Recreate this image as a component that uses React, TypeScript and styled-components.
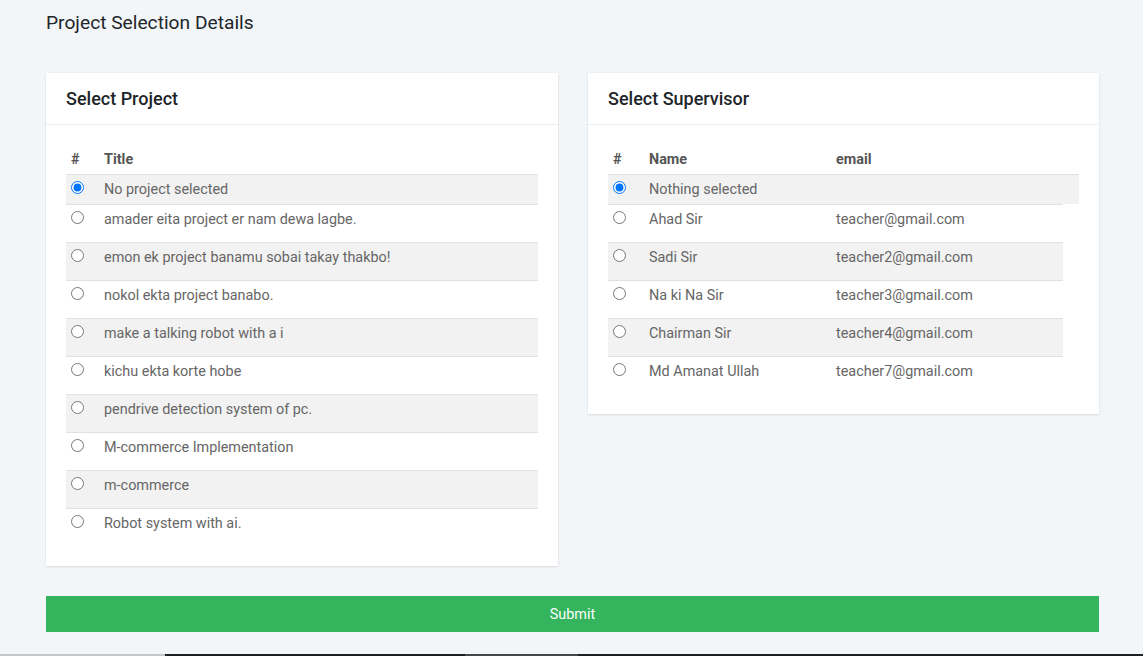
import React, { useState } from "react";
import styled, { createGlobalStyle } from "styled-components";

const GlobalStyle = createGlobalStyle`
  html, body { margin: 0; padding: 0; background: #f3f6f9; }
  body { font-family: Roboto, "Liberation Sans", sans-serif; color: #212529; }
  * { box-sizing: border-box; }
`;

const Page = styled.div`
  padding: 11px 44px 0 46px;
  display: flex;
  flex-direction: column;
`;

const PageTitle = styled.h1`
  margin: 0;
  font-size: 19.2px;
  line-height: 23px;
  font-weight: 400;
  color: #212529;
`;

const Columns = styled.div`
  margin-top: 39px;
  display: grid;
  grid-template-columns: 512px 511px;
  column-gap: 30px;
  align-items: start;
`;

const Card = styled.section`
  background: #fff;
  box-shadow: 0 1px 2px rgba(0, 0, 0, 0.1), 0 0 1px rgba(0, 0, 0, 0.08);
`;

const CardHeader = styled.header`
  padding: 15px 20px 14px;
  border-bottom: 1px solid #ebedf0;
`;

const CardTitle = styled.h2`
  margin: 0;
  font-size: 18px;
  line-height: 22px;
  font-weight: 500;
  color: #212529;
`;

const CardBody = styled.div`
  padding: 20px 20px 20px;
`;

const Row = styled.div<{ $cols: string; $shaded?: boolean; $first?: boolean; $narrow?: boolean }>`
  display: grid;
  grid-template-columns: ${(p) => p.$cols};
  align-items: start;
  padding: ${(p) => (p.$first ? "6px 0 6px" : "6px 0 14px")};
  background: ${(p) => (p.$shaded ? "#f2f2f2" : "transparent")};
  border-top: 1px solid #dee2e6;
  width: ${(p) => (p.$narrow ? "455px" : "100%")};
  font-size: 14.4px;
  line-height: 17px;
  color: #666;
`;

const HeadRow = styled.div<{ $cols: string }>`
  display: grid;
  grid-template-columns: ${(p) => p.$cols};
  padding: 6px 0 6px;
  font-size: 14.4px;
  line-height: 17px;
  font-weight: 700;
  color: #555;
`;

const IndexCell = styled.div`
  padding-left: 5px;
  display: flex;
  align-items: flex-start;
  height: 17px;
`;

const Cell = styled.div`
  white-space: nowrap;
`;

const Radio = styled.input`
  margin: 0;
  width: 13px;
  height: 13px;
`;

const Submit = styled.button`
  margin-top: 30px;
  width: 1053px;
  height: 36px;
  border: none;
  background: #34b45c;
  color: #fff;
  font-family: Roboto, "Liberation Sans", sans-serif;
  font-size: 14.4px;
  font-weight: 400;
  cursor: pointer;
`;

const Footer = styled.footer`
  margin-top: 22px;
  height: 40px;
  display: flex;
`;

const FooterSeg = styled.div<{ $w?: number; $c: string }>`
  background: ${(p) => p.$c};
  ${(p) => (p.$w ? `width: ${p.$w}px;` : "flex: 1;")}
`;

const projects = [
  "amader eita project er nam dewa lagbe.",
  "emon ek project banamu sobai takay thakbo!",
  "nokol ekta project banabo.",
  "make a talking robot with a i",
  "kichu ekta korte hobe",
  "pendrive detection system of pc.",
  "M-commerce Implementation",
  "m-commerce",
  "Robot system with ai.",
];

const supervisors = [
  ["Ahad Sir", "teacher@gmail.com"],
  ["Sadi Sir", "teacher2@gmail.com"],
  ["Na ki Na Sir", "teacher3@gmail.com"],
  ["Chairman Sir", "teacher4@gmail.com"],
  ["Md Amanat Ullah", "teacher7@gmail.com"],
];

const PCOLS = "38px 1fr";
const SCOLS = "41px 187px 1fr";

export default function App() {
  const [project, setProject] = useState(-1);
  const [sup, setSup] = useState(-1);
  return (
    <>
      <GlobalStyle />
      <Page>
        <PageTitle>Project Selection Details</PageTitle>
        <Columns>
          <Card>
            <CardHeader>
              <CardTitle>Select Project</CardTitle>
            </CardHeader>
            <CardBody>
              <HeadRow $cols={PCOLS}>
                <IndexCell>#</IndexCell>
                <Cell>Title</Cell>
              </HeadRow>
              <Row $cols={PCOLS} $shaded $first>
                <IndexCell>
                  <Radio type="radio" name="project" checked={project === -1} onChange={() => setProject(-1)} />
                </IndexCell>
                <Cell>No project selected</Cell>
              </Row>
              {projects.map((t, i) => (
                <Row key={t} $cols={PCOLS} $shaded={i % 2 === 1}>
                  <IndexCell>
                    <Radio type="radio" name="project" checked={project === i} onChange={() => setProject(i)} />
                  </IndexCell>
                  <Cell>{t}</Cell>
                </Row>
              ))}
            </CardBody>
          </Card>
          <Card>
            <CardHeader>
              <CardTitle>Select Supervisor</CardTitle>
            </CardHeader>
            <CardBody>
              <HeadRow $cols={SCOLS}>
                <IndexCell>#</IndexCell>
                <Cell>Name</Cell>
                <Cell>email</Cell>
              </HeadRow>
              <Row $cols={SCOLS} $shaded $first>
                <IndexCell>
                  <Radio type="radio" name="sup" checked={sup === -1} onChange={() => setSup(-1)} />
                </IndexCell>
                <Cell>Nothing selected</Cell>
                <Cell />
              </Row>
              {supervisors.map(([n, e], i) => (
                <Row key={n} $cols={SCOLS} $shaded={i % 2 === 1} $narrow>
                  <IndexCell>
                    <Radio type="radio" name="sup" checked={sup === i} onChange={() => setSup(i)} />
                  </IndexCell>
                  <Cell>{n}</Cell>
                  <Cell>{e}</Cell>
                </Row>
              ))}
            </CardBody>
          </Card>
        </Columns>
        <Submit type="button">Submit</Submit>
      </Page>
      <Footer>
        <FooterSeg $w={165} $c="#c6c6c6" />
        <FooterSeg $w={300} $c="#1f1f1f" />
        <FooterSeg $w={113} $c="#474747" />
        <FooterSeg $c="#1f1f1f" />
      </Footer>
    </>
  );
}
